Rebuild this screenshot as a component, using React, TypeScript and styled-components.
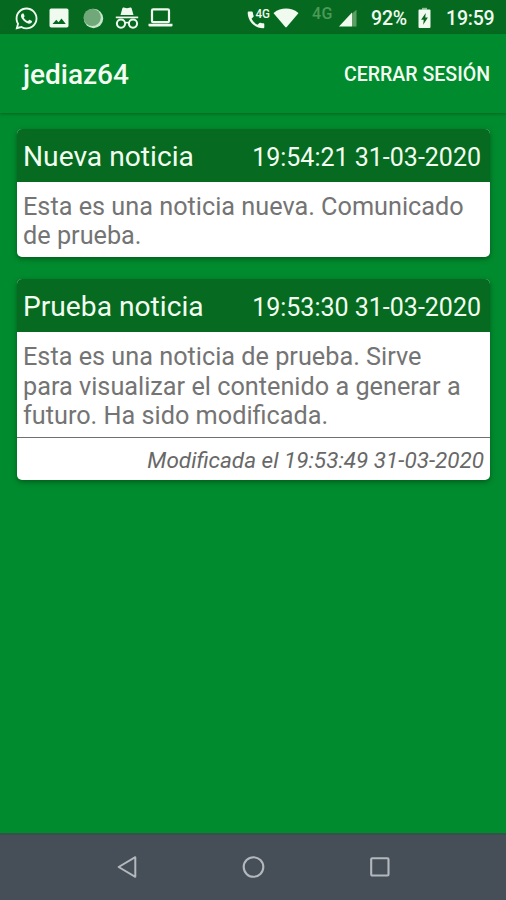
import React from 'react';
import styled, { createGlobalStyle } from 'styled-components';
import { FaWhatsapp } from 'react-icons/fa';

const GlobalStyle = createGlobalStyle`
  *, *::before, *::after { box-sizing: border-box; }
  body { margin: 0; background: #008b2e; font-family: Roboto, sans-serif; }
`;

const Screen = styled.div`
  width: 506px;
  height: 900px;
  display: flex;
  flex-direction: column;
  background: #008b2e;
  overflow: hidden;
`;

const StatusBar = styled.div`
  height: 34px;
  flex: none;
  display: flex;
  align-items: center;
  justify-content: space-between;
  padding: 2px 11px 0 14px;
  background: #056a20;
  color: #f0faef;
`;

const StatusGroup = styled.div`
  display: flex;
  align-items: center;
  svg { display: block; flex: none; }
`;

const StatusItem = styled.span<{ $before?: number }>`
  display: flex;
  margin-left: ${(p) => p.$before ?? 0}px;
`;

const StatusText = styled.span<{ $before: number; $width: number }>`
  margin: 2px 0 0 ${(p) => p.$before}px;
  width: ${(p) => p.$width}px;
  font-size: 19.5px;
  line-height: 22px;
  font-weight: 500;
  letter-spacing: -0.2px;
  white-space: nowrap;
`;

const NetworkLabel = styled.span`
  margin: -8px 0 0 13px;
  width: 21px;
  font-size: 16px;
  line-height: 18px;
  font-weight: 500;
  letter-spacing: 0.3px;
  color: #4c9a58;
`;

const AppBar = styled.header`
  height: 79px;
  flex: none;
  display: flex;
  align-items: center;
  justify-content: space-between;
  padding: 0 16px 0 23px;
  color: #f4fff2;
  box-shadow: 0 1px 3px rgba(0, 45, 10, 0.42);
`;

const UserName = styled.h1`
  margin: 3px 0 0;
  font-size: 28px;
  line-height: 32px;
  font-weight: 500;
`;

const LogoutButton = styled.button`
  border: 0;
  padding: 0;
  margin-top: 3px;
  background: none;
  color: inherit;
  font: 500 19.55px/24px Roboto, sans-serif;
  white-space: nowrap;
`;

const NewsList = styled.main`
  flex: 1;
  display: flex;
  flex-direction: column;
  gap: 22px;
  padding: 16px 16px 0 17px;
`;

const Card = styled.article`
  border-radius: 5px;
  overflow: hidden;
  background: #fff;
  box-shadow: 0 2px 5px rgba(0, 45, 10, 0.5);
`;

const CardHeader = styled.div`
  height: 53px;
  display: flex;
  align-items: baseline;
  justify-content: space-between;
  padding: 12px 9px 0 6px;
  background: #066a20;
  color: #f2fff0;
  white-space: nowrap;
`;

const CardTitle = styled.h2`
  margin: 0;
  font-size: 28.2px;
  line-height: 32px;
  font-weight: 400;
`;

const CardDate = styled.time`
  font-size: 25px;
  line-height: 32px;
`;

const CardBody = styled.p`
  margin: 0;
  padding: 10px 6px 6.8px;
  font-size: 25.25px;
  line-height: 29.3px;
  color: #747474;
  white-space: pre-line;
`;

const CardFooter = styled.div`
  height: 43px;
  padding: 8px 6px 0 0;
  border-top: 1px solid #707070;
  text-align: right;
  font-size: 22.5px;
  line-height: 28px;
  font-style: italic;
  color: #686868;
  white-space: nowrap;
`;

const NavBar = styled.nav`
  height: 67px;
  flex: none;
  display: flex;
  align-items: center;
  gap: 102px;
  padding: 0 0 2px 115px;
  background: #464e57;
  border-top: 2px solid #35524a;
  svg { display: block; }
`;

const NavButton = styled.button`
  border: 0;
  padding: 0;
  background: none;
  color: #b3b8bd;
`;

const ImageIcon = () => (
  <svg width="20" height="20" viewBox="0 0 20 20">
    <path fill="currentColor" fillRule="evenodd" d="M2.2.5h15.6q1.7 0 1.7 1.7v15.6q0 1.7-1.7 1.7H2.2Q.5 19.5.5 17.8V2.2Q.5.5 2.2.5ZM3.5 16h13.3l-4.3-5.5-3 3.8-2.200-2.6Z" />
  </svg>
);

const SphereIcon = () => (
  <svg width="21" height="21" viewBox="0 0 21 21">
    <circle cx="10.5" cy="10.5" r="9.7" fill="#c7e7ca" />
    <circle cx="9.2" cy="9.3" r="8.6" fill="#70a879" />
  </svg>
);

const IncognitoIcon = () => (
  <svg width="24" height="22" viewBox="0 0 24 22" fill="none" stroke="currentColor">
    <path d="M5.5 8 7.4 1.3Q7.7.3 8.7.6l3.3.7 3.3-.7q1-.3 1.3.7L18.5 8Z" fill="currentColor" stroke="none" />
    <path d="M.8 10.400h22.400" strokeWidth="1.7" />
    <circle cx="6" cy="16.6" r="4.1" strokeWidth="2" />
    <circle cx="18" cy="16.6" r="4.1" strokeWidth="2" />
    <path d="M9.900 16.200q2.100-1.300 4.200 0" strokeWidth="1.6" />
  </svg>
);

const LaptopIcon = () => (
  <svg width="25" height="20" viewBox="0 0 25 20" fill="none" stroke="currentColor">
    <rect x="4" y="1.4" width="17" height="12.8" rx="1.2" strokeWidth="2.2" />
    <path d="M.5 15.700h24v1.500q0 1.200-1.200 1.200H1.700q-1.200 0-1.200-1.200Z" fill="currentColor" stroke="none" />
  </svg>
);

const CallIcon = () => (
  <svg width="25" height="29" viewBox="0 -3 25 29">
    <path fill="currentColor" d="M1.700 4.500h3.100q.9 0 1 .9.200 1.900.8 3.400.2.600-.3 1.100L4.500 11.700q2.300 4.200 6 6l1.900-1.800q.5-.4 1.100-.2 1.500.5 3 .6.800.1.800.9v3q0 1-1 1C7.400 21.200.7 14.200.7 5.600q0-1 1-1.100Z" />
    <text x="8.4" y="11.2" fill="currentColor" fontFamily="Roboto, sans-serif" fontSize="13.5" fontWeight="500" textLength="14.5" lengthAdjust="spacingAndGlyphs">4G</text>
  </svg>
);

const WifiIcon = () => (
  <svg width="26" height="20" viewBox="0 0 26 20">
    <path fill="currentColor" d="M.9 4.700Q6.300.5 13 .5t12.100 4.200q.5.4.1.9L13.700 19q-.7.8-1.400 0L.8 5.600q-.4-.5.1-.9Z" />
  </svg>
);

const SignalIcon = () => (
  <svg width="18" height="18" viewBox="0 0 18 18">
    <path fill="#5e9d66" d="M12.800 4.700 17.500.7V17.500h-4.700Z" />
    <path fill="currentColor" d="M0 17.500 13 3.500V17.500Z" />
  </svg>
);

const BatteryIcon = () => (
  <svg width="13" height="22" viewBox="0 0 13 22">
    <path fill="#8fbd93" d="M4 .8h5v2H4Z" />
    <path fill="currentColor" fillRule="evenodd" d="M1.400 2.600h10.200q.9 0 .9.900v16.600q0 .9-.9.900H1.400q-.9 0-.9-.9V3.500q0-.9.900-.9ZM7.700 6 3.100 12.800h2.600L5.200 17.800l4.700-7.200H7.300Z" />
  </svg>
);

const BackIcon = () => (
  <svg width="24" height="24" viewBox="0 0 24 24" fill="none" stroke="currentColor" strokeWidth="2" strokeLinejoin="round">
    <path d="M20.300 2.200v19.600L3.600 12Z" />
  </svg>
);

const HomeIcon = () => (
  <svg width="24" height="24" viewBox="0 0 24 24" fill="none" stroke="currentColor" strokeWidth="2.1">
    <circle cx="12.5" cy="12" r="9.8" />
  </svg>
);

const RecentsIcon = () => (
  <svg width="24" height="24" viewBox="0 0 24 24" fill="none" stroke="currentColor" strokeWidth="2.1">
    <rect x="4.2" y="3.2" width="17.3" height="17.3" rx="1" />
  </svg>
);

type News = { title: string; date: string; body: string; modified?: string };

const news: News[] = [
  {
    title: 'Nueva noticia',
    date: '19:54:21 31-03-2020',
    body: 'Esta es una noticia nueva. Comunicado\nde prueba.',
  },
  {
    title: 'Prueba noticia',
    date: '19:53:30 31-03-2020',
    body: 'Esta es una noticia de prueba. Sirve\npara visualizar el contenido a generar a\nfuturo. Ha sido modificada.',
    modified: 'Modificada el 19:53:49 31-03-2020',
  },
];

export default function App() {
  return (
    <>
      <GlobalStyle />
      <Screen>
        <StatusBar>
          <StatusGroup>
            <StatusItem><FaWhatsapp size={25} /></StatusItem>
            <StatusItem $before={10}><ImageIcon /></StatusItem>
            <StatusItem $before={14}><SphereIcon /></StatusItem>
            <StatusItem $before={11}><IncognitoIcon /></StatusItem>
            <StatusItem $before={9}><LaptopIcon /></StatusItem>
          </StatusGroup>
          <StatusGroup>
            <StatusItem><CallIcon /></StatusItem>
            <StatusItem $before={1}><WifiIcon /></StatusItem>
            <NetworkLabel>4G</NetworkLabel>
            <StatusItem $before={6}><SignalIcon /></StatusItem>
            <StatusText $before={14} $width={36}>92%</StatusText>
            <StatusItem $before={11}><BatteryIcon /></StatusItem>
            <StatusText $before={15} $width={49}>19:59</StatusText>
          </StatusGroup>
        </StatusBar>
        <AppBar>
          <UserName>jediaz64</UserName>
          <LogoutButton>CERRAR SESIÓN</LogoutButton>
        </AppBar>
        <NewsList>
          {news.map((item) => (
            <Card key={item.title}>
              <CardHeader>
                <CardTitle>{item.title}</CardTitle>
                <CardDate>{item.date}</CardDate>
              </CardHeader>
              <CardBody>{item.body}</CardBody>
              {item.modified && <CardFooter>{item.modified}</CardFooter>}
            </Card>
          ))}
        </NewsList>
        <NavBar>
          <NavButton aria-label="Atrás"><BackIcon /></NavButton>
          <NavButton aria-label="Inicio"><HomeIcon /></NavButton>
          <NavButton aria-label="Recientes"><RecentsIcon /></NavButton>
        </NavBar>
      </Screen>
    </>
  );
}
